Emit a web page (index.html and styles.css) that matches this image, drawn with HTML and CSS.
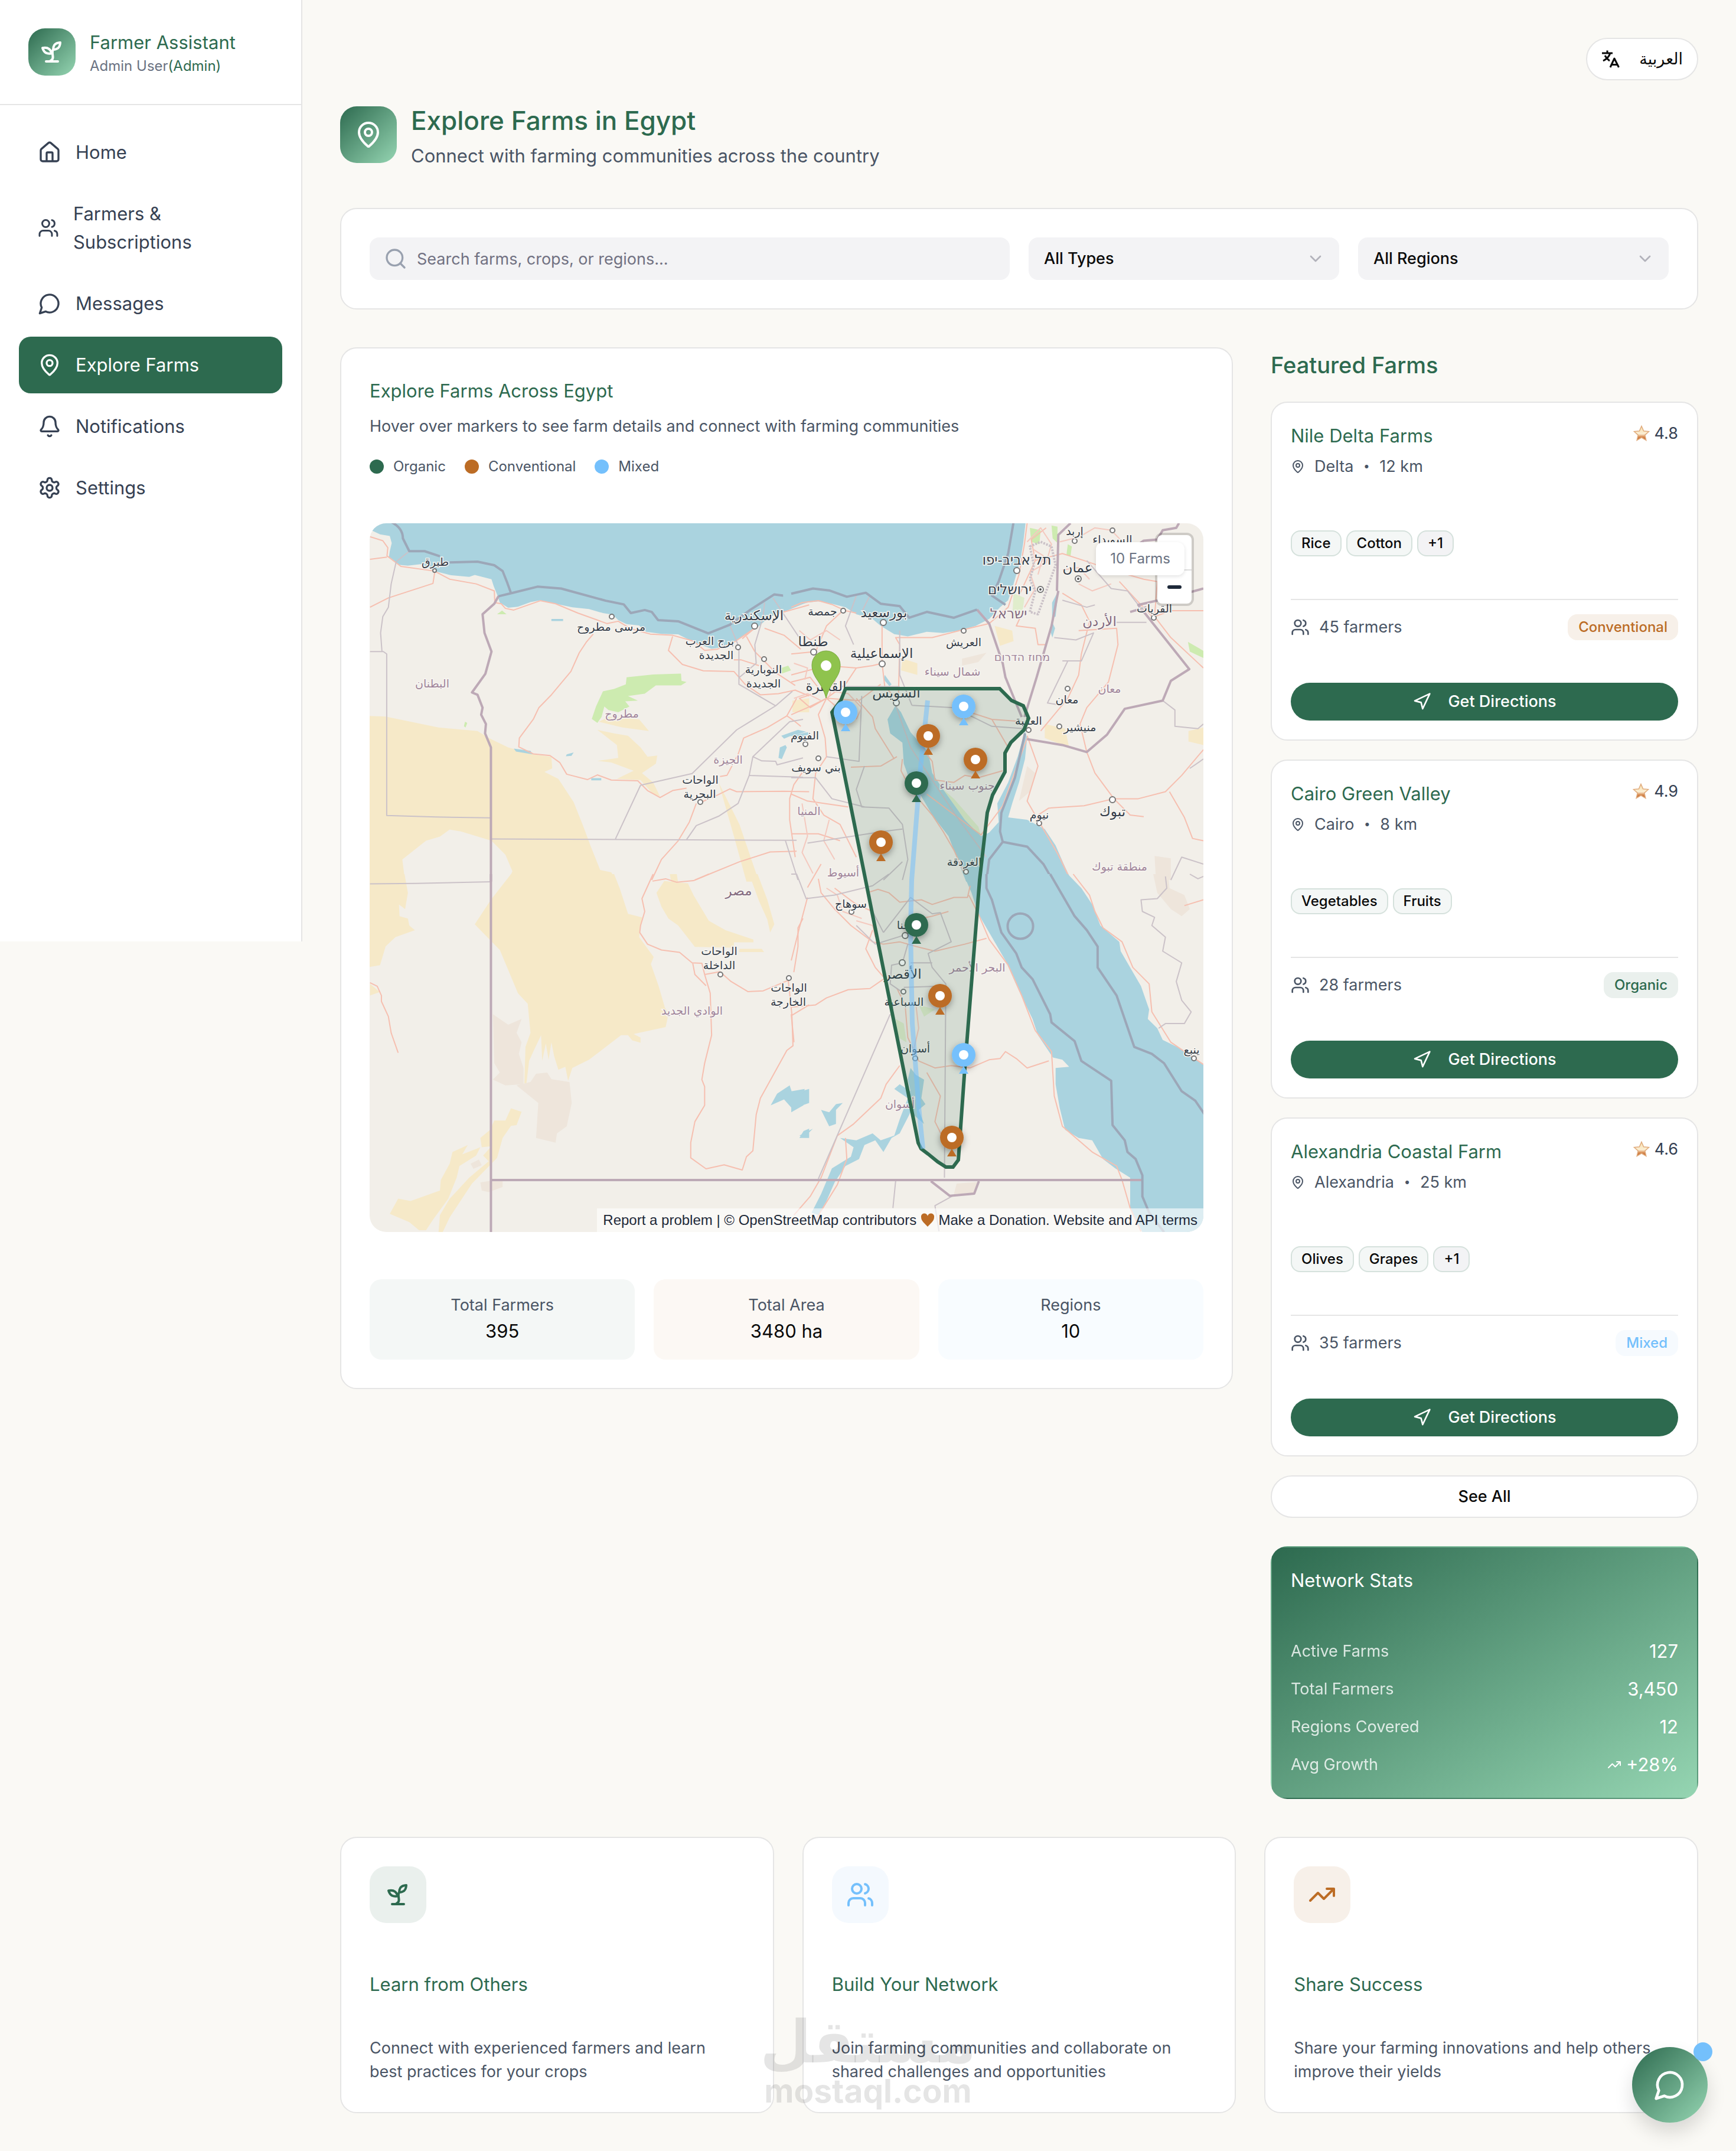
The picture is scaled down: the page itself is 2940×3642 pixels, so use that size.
FILE: index.html
```html
<!DOCTYPE html>
<html lang="en">
<head>
<meta charset="utf-8">
<meta name="viewport" content="width=device-width, initial-scale=1">
<title>Farmer Assistant</title>
<link rel="stylesheet" href="styles.css">
</head>
<body>
<svg class="sprite" aria-hidden="true">
  <symbol id="i-sprout" viewBox="0 0 24 24"><path d="M7 20h10M10 20c5.500-2.500.8-6.400 3-10M9.500 9.400c1.100.8 1.800 2.200 2.300 3.700-2 .4-3.500.4-4.800-.3-1.200-.6-2.300-1.900-3-4.200 2.800-.5 4.400 0 5.500.8zM14.100 6a7 7 0 0 0-1.100 4c1.900-.1 3.300-.6 4.300-1.400 1-1 1.600-2.300 1.700-4.600-2.700.1-4 1-4.900 2z"/></symbol>
  <symbol id="i-home" viewBox="0 0 24 24"><path d="M15 21v-8a1 1 0 0 0-1-1h-4a1 1 0 0 0-1 1v8M3 10a2 2 0 0 1 .709-1.528l7-5.999a2 2 0 0 1 2.582 0l7 5.999A2 2 0 0 1 21 10v9a2 2 0 0 1-2 2H5a2 2 0 0 1-2-2z"/></symbol>
  <symbol id="i-users" viewBox="0 0 24 24"><path d="M16 21v-2a4 4 0 0 0-4-4H6a4 4 0 0 0-4 4v2M16 3.128a4 4 0 0 1 0 7.744M22 21v-2a4 4 0 0 0-3-3.870"/><circle cx="9" cy="7" r="4"/></symbol>
  <symbol id="i-chat" viewBox="0 0 24 24"><path d="M7.900 20A9 9 0 1 0 4 16.100L2 22Z"/></symbol>
  <symbol id="i-pin" viewBox="0 0 24 24"><path d="M20 10c0 4.993-5.539 10.193-7.399 11.799a1 1 0 0 1-1.202 0C9.539 20.193 4 14.993 4 10a8 8 0 0 1 16 0"/><circle cx="12" cy="10" r="3"/></symbol>
  <symbol id="i-bell" viewBox="0 0 24 24"><path d="M10.268 21a2 2 0 0 0 3.464 0M3.262 15.326A1 1 0 0 0 4 17h16a1 1 0 0 0 .74-1.673C19.410 13.956 18 12.499 18 8A6 6 0 0 0 6 8c0 4.499-1.411 5.956-2.738 7.326"/></symbol>
  <symbol id="i-gear" viewBox="0 0 24 24"><path d="M12.220 2h-.44a2 2 0 0 0-2 2v.18a2 2 0 0 1-1 1.730l-.43.25a2 2 0 0 1-2 0l-.15-.08a2 2 0 0 0-2.730.73l-.22.38a2 2 0 0 0 .73 2.730l.15.1a2 2 0 0 1 1 1.720v.51a2 2 0 0 1-1 1.740l-.15.09a2 2 0 0 0-.73 2.730l.22.38a2 2 0 0 0 2.730.73l.15-.08a2 2 0 0 1 2 0l.43.25a2 2 0 0 1 1 1.730V20a2 2 0 0 0 2 2h.44a2 2 0 0 0 2-2v-.18a2 2 0 0 1 1-1.730l.43-.25a2 2 0 0 1 2 0l.15.08a2 2 0 0 0 2.730-.73l.22-.39a2 2 0 0 0-.73-2.730l-.15-.08a2 2 0 0 1-1-1.740v-.5a2 2 0 0 1 1-1.740l.15-.09a2 2 0 0 0 .73-2.730l-.22-.38a2 2 0 0 0-2.730-.73l-.15.08a2 2 0 0 1-2 0l-.43-.25a2 2 0 0 1-1-1.730V4a2 2 0 0 0-2-2z"/><circle cx="12" cy="12" r="3"/></symbol>
  <symbol id="i-search" viewBox="0 0 24 24"><circle cx="11" cy="11" r="8"/><path d="m21 21-4.340-4.340"/></symbol>
  <symbol id="i-chevron" viewBox="0 0 24 24"><path d="m6 9 6 6 6-6"/></symbol>
  <symbol id="i-nav" viewBox="0 0 24 24"><path d="M3 11 22 2l-9 19-2-8z"/></symbol>
  <symbol id="i-trend" viewBox="0 0 24 24"><path d="M16 7h6v6M22 7l-8.500 8.500-5-5L2 17"/></symbol>
  <symbol id="i-translate" viewBox="0 0 32 32"><path d="M1 6h18M10 1.500V6M15 6C13 12 9 16 3 19M6 10c2 4 5 7 8 9M15 30l7-15 7.500 15M17.500 25.500h9"/></symbol>
  <symbol id="i-star" viewBox="0 0 28 28"><path d="M14 1.500l3.600 8.300 9 .8-6.800 6 2 8.900L14 20.800l-7.800 4.700 2-8.900-6.800-6 9-.8z" fill="url(#starFill)" stroke="#e0ab7c" stroke-width="1.500"/></symbol>
  <symbol id="i-heart" viewBox="0 0 24 24"><path d="M12 23C8 18 1 14 1 7a5.500 5.500 0 0 1 11-2 5.500 5.500 0 0 1 11 2c0 7-7 11-11 16z" fill="#bc6c25"/></symbol>
</svg>
<svg class="sprite" aria-hidden="true"><defs><linearGradient id="starFill" x1="0" y1="0" x2="0" y2="1"><stop offset="0" stop-color="#f6dfae"/><stop offset=".55" stop-color="#fbeed3"/><stop offset=".75" stop-color="#d98f56"/><stop offset="1" stop-color="#b5531c"/></linearGradient></defs></svg>

<div class="app">
  <aside class="sidebar">
    <div class="brand">
      <span class="tile tile-logo"><svg class="icon icon-48"><use href="#i-sprout"/></svg></span>
      <div>
        <div class="brand-name">Farmer Assistant</div>
        <div class="brand-user">Admin User<span class="green">(Admin)</span></div>
      </div>
    </div>
    <nav class="nav">
      <a class="nav-item" href="#home"><svg class="icon icon-40"><use href="#i-home"/></svg><span>Home</span></a>
      <a class="nav-item" href="#farmers"><svg class="icon icon-40"><use href="#i-users"/></svg><span>Farmers &amp; Subscriptions</span></a>
      <a class="nav-item" href="#messages"><svg class="icon icon-40"><use href="#i-chat"/></svg><span>Messages</span></a>
      <a class="nav-item active" href="#explore" aria-current="page"><svg class="icon icon-40"><use href="#i-pin"/></svg><span>Explore Farms</span></a>
      <a class="nav-item" href="#notifications"><svg class="icon icon-40"><use href="#i-bell"/></svg><span>Notifications</span></a>
      <a class="nav-item" href="#settings"><svg class="icon icon-40"><use href="#i-gear"/></svg><span>Settings</span></a>
    </nav>
  </aside>

  <main class="main">
    <div class="topbar">
      <button class="lang" type="button"><svg class="icon icon-32 icon-bold"><use href="#i-translate"/></svg><span lang="ar">العربية</span></button>
    </div>

    <header class="page-head">
      <span class="tile"><svg class="icon icon-48"><use href="#i-pin"/></svg></span>
      <div>
        <h1>Explore Farms in Egypt</h1>
        <p>Connect with farming communities across the country</p>
      </div>
    </header>

    <form class="card filters">
      <div class="field search">
        <label class="sr" for="q">Search farms</label>
        <svg class="icon icon-40"><use href="#i-search"/></svg>
        <input id="q" type="text" placeholder="Search farms, crops, or regions...">
      </div>
      <div class="field">
        <label class="sr" for="type">Farm type</label>
        <select id="type"><option>All Types</option></select>
        <svg class="icon icon-32"><use href="#i-chevron"/></svg>
      </div>
      <div class="field">
        <label class="sr" for="region">Region</label>
        <select id="region"><option>All Regions</option></select>
        <svg class="icon icon-32"><use href="#i-chevron"/></svg>
      </div>
    </form>

    <div class="columns">
      <section class="card map-card">
        <h2 class="card-title">Explore Farms Across Egypt</h2>
        <p class="map-sub">Hover over markers to see farm details and connect with farming communities</p>
        <ul class="legend">
          <li><span class="dot organic"></span>Organic</li>
          <li><span class="dot conventional"></span>Conventional</li>
          <li><span class="dot mixed"></span>Mixed</li>
        </ul>

        <div class="map">
          <svg class="map-art" viewBox="0 0 1412 1200" role="img" aria-label="Map of Egypt with farm markers">
            <defs>
              <filter id="pinShadow" x="-60%" y="-60%" width="220%" height="220%"><feDropShadow dx="0" dy="4" stdDeviation="6" flood-opacity=".35"/></filter>
              <g id="pinBody"><circle r="20" filter="url(#pinShadow)"/><path d="M0 19l8 13h-16z"/><circle r="8" fill="#fff"/></g>
            </defs>
            <rect width="1412" height="1200" fill="#f2efe9"/>

            <!-- north-west -->
            <g class="tilemap" transform="translate(-6 -16) scale(.4719 .3954)">
              <path class="sand" d="M0 865L70 868 260 915 400 930 440 960 510 1000 600 1030 665 1040 668 1090 640 1105 690 1135 745 1235 780 1340 805 1420 840 1525 880 1535 900 1575H510L525 1530 500 1460 450 1400 340 1360 300 1352 265 1382 215 1400 130 1480 140 1575H0z"/>
              <path class="sand" d="M830 925L890 940 940 950 985 1000 1010 1040 1045 1035 1040 1070 990 1110 1030 1150 1055 1210 1030 1200 985 1140 900 1135 960 1100 880 1065 830 1058 905 1045 900 990zM835 890L870 870 980 880 1015 930 920 915zM1265 1150L1340 1330 1410 1575H1365L1320 1380zM1530 800L1590 790V850L1530 850z"/>
              <path class="green-area" d="M935 700L1030 688 1130 684 1132 715 1150 720 1130 735 1040 735 1000 770 940 780 975 800 930 803 945 825 905 850 870 840 855 825 845 870 830 895 810 878 825 825 850 760 890 750 932 730zM355 890l8 5-6 20-6-5zM470 430l18-16 16 16zM1490 660l25-10 10 20-35 15z"/>
              <path class="water" d="M0 60L50 88 85 95 92 125 85 160 82 185 100 200 115 218 150 222 200 215 245 245 300 262 370 270 390 262 450 280 458 310 470 345 480 380 510 402 545 398 590 378 625 370 680 385 740 400 800 408 850 425 885 432 905 455 935 472 980 478 1005 505 1060 514 1120 516 1160 540 1200 560 1240 578 1280 570 1320 548 1360 520 1400 490 1450 440 1500 420 1590 375V30H0z"/>
              <path class="water" d="M665 450h42v9h-42zM530 1005l60 10 8 15-60-12zM720 1030l25-8-8 14-20 2zM808 1132h36v9h-36zM1490 950l60-25 30 8-60 20-20 10zM1485 1000l20-10 5 10-18 50-12-5z"/>
              <path class="road" d="M14 98L60 115 78 145 75 180 125 225 245 245 300 280 395 300 460 330 462 380 485 385 500 405 530 412 625 372 680 385 760 425 865 470 905 460 950 492 1020 515 1100 520 1175 545 1215 585 1260 580 1320 550 1394 490M14 195L75 185M247 245L240 298 80 360 14 400M815 515L790 550 765 595 735 675 665 775 620 830 600 880 550 960 548 998 600 1028 660 1035 695 1065 720 1115 795 1138 830 1118 880 1140 975 1143 1010 1185 1055 1215 1100 1185 1150 1175M1100 525L1085 585 1135 645 1210 672 1320 675 1360 730 1415 775 1480 770 1540 755 1590 780M1320 625L1345 625 1410 650M1394 490L1350 535M1365 525L1395 590 1470 680 1540 735M1430 490L1500 520 1560 580M1470 430L1590 390M1545 790L1510 865 1440 915 1355 960 1335 1030 1295 1120 1270 1125M1510 865L1540 890 1560 910M1200 1236L1260 1205 1305 1178 1330 1190 1500 1188 1590 1190M1185 1240L1160 1320 1120 1400 1060 1480 1025 1568M1180 1568L1340 1490 1450 1448 1545 1445M1570 1100L1535 1160 1520 1220 1520 1310 1530 1390 1540 1470"/>
              <path class="admin" d="M155 160L108 205 90 300 80 400 60 440 52 510 57 590M14 590H62L74 600V1292L250 1298 448 1302M448 1392L1545 1398M985 1162L895 1392M985 1162L1170 1112 1330 925 1470 822 1530 760M1338 570V730L1470 822M1305 475L1338 570M1430 380L1425 440 1395 560 1400 640 1340 700M1568 880L1520 890 1388 1040 1375 1120 1568 1128M1388 1040L1420 1058 1470 1060 1475 1075 1568 1045M1375 1120L1335 1240 1265 1295 1185 1335 1150 1395M1460 360L1510 450 1560 540M1505 1400L1550 1568"/>
              <path class="border" d="M475 353L460 385 418 430 425 510 450 590 428 685 380 765 400 775 418 830 413 860 430 900 427 940 448 1000V1575"/>
              <path class="sea-border" d="M90 35C115 50 132 70 132 105L155 160H210L265 182M300 208L400 205 460 220 490 245 505 290 520 340M475 353L520 340 615 312 700 320 860 372 925 388 950 425 1000 412 1025 420 1048 455 1120 460 1228 512 1305 475 1380 410 1465 345 1510 352 1590 330"/>
            </g>

            <!-- south-west -->
            <g class="tilemap" transform="translate(-6 594) scale(.4719 .3954)">
              <path class="sand" d="M0 0H138L150 80 140 150 118 130 120 180 150 190 155 220 175 240 105 270 70 310 50 390 0 400zM520 0H890L910 60 940 170 990 185 980 270 1032 355 1022 385 1050 480 1072 570 1085 600 1075 655 960 685 985 700V722L955 712 940 690 915 690 800 795 740 830 725 885 715 825 690 838 675 780 665 720 655 795 645 725 632 800 628 690 600 760 585 800 575 900 568 895 572 740 590 680 580 555 545 510 480 325 390 215 448 110zM1090 0l25 0 5 38-25-5zM1070 30L1155 40 1175 90 1230 200 1290 240 1390 280V292H1320V315L1180 312 1120 220 1085 190 1060 140 1042 80zM1375 0H1405L1440 110 1465 215 1450 250 1440 195 1410 115zM1340 320h80l8 14h-90z"/>
              <path class="sand" d="M520 1003L558 1018 540 1075 520 1078 490 1130 470 1215 380 1325 300 1470 275 1533H260L265 1460 300 1390 370 1300 440 1230 420 1205 450 1165 415 1170 410 1130 445 1095 460 1055H500zM310 1190L365 1160 345 1200 410 1170 395 1205 335 1250 325 1300 295 1390 240 1480 215 1525H190L155 1490 85 1455 115 1390 160 1400 265 1355 268 1310 300 1240zM14 470l35 35-35 15z"/>
              <path class="scrub" d="M455 600L510 645 558 620 540 680 558 720 548 770 565 830V900L500 905 455 880 480 850 460 810zM540 905L590 890 610 855 650 850 665 878 730 890 738 980 720 1080 685 1110 680 1150 610 1130 618 980zM375 1240l30-18 10 25-30 15zM410 1320L490 1305V1340L440 1362 415 1355z"/>
              <path class="water" d="M1452 990L1475 940 1520 905 1530 940 1590 920V980L1530 1005 1500 965zM1555 1130l15-30 20-10v40z"/>
              <path class="road" d="M14 465L40 480 55 520 55 545 80 610 90 680 115 765M1030 0L990 105 1000 160 985 220 982 250 1010 300 1060 325 1125 335 1170 380 1205 382 1215 430 1270 418 1310 460 1370 503 1425 500 1515 455M1028 30L1075 20 1115 35 1175 28 1230 0M1172 380L1180 430 1220 478M1215 430L1235 510 1240 690 1215 810 1205 880 1215 910V990L1180 1060 1165 1150 1165 1215 1220 1262 1285 1245 1350 1267 1365 1210 1388 1185 1400 1030 1415 960 1510 755 1532 735 1528 600 1515 455M1568 190L1550 230V310L1535 420M1528 605L1590 560"/>
              <path class="admin" d="M14 42L180 40 448 33"/>
              <path class="border" d="M448 0V1540M448 1310H1600"/>
            </g>

            <!-- north-east -->
            <g class="tilemap" transform="translate(714 -16) scale(.4592 .3954)">
              <path class="sand" d="M750 480L815 500 820 545 770 565zM935 900L1010 920 1025 1000 935 960zM1465 930L1520 915V990L1465 975zM410 620l55 20v50l-60-20z"/>
              <path class="scrub" d="M870 1080L900 1110 880 1190 840 1230zM1340 1465l60 10v93h-55zM630 620l90-25-30 40-60 15z"/>
              <path class="green-area" d="M1463 548L1525 590V620L1470 590zM880 60l40 10-5 60-30-10zM960 50l22 5v70l-18-20zM1020 130l15 10-5 40-15-5z"/>
              <path class="green-area pale" d="M560 1180L600 1220 690 1340 700 1378 640 1310zM820 340l40 20-10 80-35 10z"/>
              <path class="water" d="M-30 410L60 380 100 375 150 385 200 400 240 430 300 450 330 480 380 515 430 525 500 505 560 510 620 500 680 480 730 450 770 400 800 370 815 320 830 260 845 200 855 130 865 30H-30z"/>
              <path class="water" d="M385 820L405 850 440 935 505 1020 520 1110 560 1180 640 1310 700 1380 730 1365 765 1320 760 1240 800 1150 835 1040 862 930 870 960 862 1050 840 1150 815 1240 800 1300 870 1310 935 1350 975 1420 1005 1500 1035 1575H645L600 1440 580 1380 520 1290 480 1210 440 1150 415 1070 410 980 365 940 355 880zM985 330L975 440 962 445 962 380zM965 470l8 20-10 40-8-30zM345 690l25 40-8 8-22-30zM0 950l60-15 10 8-50 25z"/>
              <path class="road" d="M0 400L40 380 100 372 150 388 200 415 240 425M0 600L90 590 130 480 190 415M80 590L130 640 100 700 130 780M335 470L335 640 300 650 240 660 130 650 0 690M335 640L345 740 395 800 400 560 385 530 520 530 620 500 730 470 800 400 840 260 860 130 870 40M240 790L300 870 310 920 380 1050M130 790L60 830 0 860M130 790L100 860 125 960 130 1040 90 1110 80 1220 120 1290 180 1330 240 1470M130 790L200 730 240 660M130 790L250 800 330 730M0 720L70 700 110 760 30 790 70 830 130 790 190 850 230 860M410 1050L405 1100 440 1180 520 1290 560 1360 600 1440 650 1568M660 850L740 880 860 890M480 1000L520 1060 530 1140 600 1150 640 1120 690 1130 780 1100M740 880L800 1000M840 350L900 200 885 110 940 60M900 200L1000 170 1080 200 1180 240 1300 280 1350 290M850 430L830 480 900 490 910 560 940 560 960 490M1000 340L1070 390 1100 460 1070 600 1060 690 1040 740 1020 790 920 930M1060 500L1200 490 1205 560 1170 720 1090 830 1065 900 1090 1020 1120 1110 1190 1220M1190 1220L1280 1220 1380 1190 1440 1120 1520 1010M1190 1220L1080 1250 950 1260 910 1290M1190 1220L1250 1290 1300 1297M1395 1190L1450 1300 1480 1390 1520 1400M870 950L910 1080 870 1230 920 1330M1350 290L1340 440 1400 530 1520 660M1340 440L1400 415 1520 415M1210 290L1290 390 1340 450M0 1200L60 1230 210 1255M0 1370L100 1370 180 1400M220 1085L330 1080 390 1040M920 1330L985 1460 1030 1568M500 1200L700 1375 780 1250 870 960M110 1500L80 1560 60 1600"/>
              <path class="road minor" d="M10 640L60 660 50 710M150 760L210 770 260 830 240 880M170 640L160 720 140 780M30 500L70 540 130 500 180 540M870 120L920 60 960 130 940 210 880 250 900 320 860 400M890 150L930 180 910 260M990 120L1060 100 1120 60 1180 70 1230 130M1060 300L1110 330 1180 300M1000 240L1060 230 1100 280M10 790L60 770 110 800M40 1240L60 1380 40 1450 80 1540M140 1310L120 1400 160 1480"/>
              <path class="admin" d="M240 350L200 480 230 560M290 350L260 420M180 740L400 740M260 780L250 1060 130 1040M445 820L600 830 740 910 860 920M400 500V690L445 820M270 1080L240 1180 260 1255 360 1260 410 1330 430 1480 410 1568M0 1130L90 1130 150 1220 270 1255M60 1410L340 1360 410 1350M340 1568L410 1490M1000 630L1070 630 1115 510 1050 540 970 530M1000 370L1090 400 1120 390M1200 465H1310M1020 630L970 750 945 810 1000 820M1090 200L1180 320 1240 330 1280 390M1370 800L1415 840V910L1500 920 1520 900M1520 1050L1470 1090M1520 1500L1440 1470 1400 1568M385 820L440 1000 600 1280 720 1470"/>
              <path class="admin hatch" d="M880 140L920 120 960 140 975 220 950 300 910 430 880 420 900 330 880 280 895 220z"/>
              <path class="border" d="M685 410L730 470 780 640 790 700 850 870M980 330L985 90 1030 40M985 330L960 480 930 600 905 700 860 870M870 965L1000 990 1090 1020 1165 945 1230 835 1370 800 1400 715 1468 665 1280 390 1410 355 1520 320M1310 400L1250 420M1430 40L1420 60 1370 70 1350 110 1300 115 1220 180"/>
              <path class="sea-border" d="M820 35L800 170 765 290 740 350 790 390M0 342L80 320 140 328 205 355 275 338 330 385 400 395 435 445 500 420 600 445 685 410M862 940L825 1130 775 1280 770 1360 780 1405 730 1480 720 1568M780 1405L870 1425 930 1500 960 1560"/>
            </g>

            <!-- south-east -->
            <g class="tilemap" transform="translate(714 594) scale(.4592 .3954)">
              <path class="scrub" d="M1335 0H1390L1395 60 1450 90 1470 150 1440 180 1400 150 1350 80zM610 1325L690 1318 680 1365 600 1370z"/>
              <path class="green-area pale" d="M385 620L415 640 425 720 395 700zM470 560l60 20-40 30z"/>
              <path class="water" d="M635 0L665 80 690 170 740 270 790 370 840 500 890 620 910 690 965 785 1000 795 1025 825 975 830 975 900 990 1000 1010 1095 1060 1130 1110 1140 1150 1220 1195 1260 1250 1300V1430L1300 1545H1530V825L1440 750 1370 710 1350 660 1315 620 1320 580 1290 480 1215 330 1210 290 1140 220 1110 130 1070 60 1020 0z"/>
              <path class="water" d="M440 830L460 860 490 880 480 960 495 985 470 1010 490 1070 440 1020 400 1110 370 1130 340 1190 310 1140 270 1160 250 1220 200 1250 160 1320 130 1400 100 1460 75 1450 110 1370 150 1260 220 1210 230 1170 180 1130 240 1140 300 1110 330 1140 380 1120 400 1050 430 960 380 920 400 900 440 930 430 880zM0 930L50 920 40 950 45 990 0 1020zM110 1010L140 1020 165 985 190 980 165 1010V1070L140 1080zM30 1120L80 1090 50 1125z"/>
              <path class="road" d="M1040 0L1100 90 1120 160 1150 230 1220 290 1260 400 1320 470 1330 590 1400 720 1520 815M1450 135L1520 110M280 80L320 65 360 80 400 120 480 110 520 130 600 100 650 100 660 50M655 90L690 170 730 280 800 390 850 520 900 670 960 760 970 950 1000 1080 1110 1190 1200 1250 1220 1310 1250 1430 1290 1530M100 20L110 80 160 150 220 220 300 290 340 300 400 290M300 240L275 320 310 400 340 440M400 290L460 310 530 330 640 300 720 275M390 490L420 560 430 700 470 800 530 830 590 820 660 830 730 795 770 790 790 760 830 790 870 830 950 800M500 850L550 950 530 1060 560 1130M400 820L350 900 330 960 230 1070 170 1120 110 1300 70 1380 10 1460M200 1130L205 1220 170 1330 90 1480M0 570L90 560 130 530 210 495 290 490 340 450M0 600L10 720M60 100L30 230 0 370M300 160L240 130 160 60M440 200L520 180 580 160"/>
              <path class="road minor" d="M130 60L170 90 190 160 260 190M240 200L300 220 310 270M460 560L470 660 450 760"/>
              <path class="admin" d="M0 0L20 0 55 105 160 90 300 50 360 0M340 250L440 100 520 170 550 165 590 290 505 340 520 400 570 470 565 1300M415 485L550 480M365 600L100 1305M340 250L300 160M440 380H520M430 300L410 380 370 390 365 470 415 510M240 220L310 300 420 260M385 1315L375 1430M600 1375L530 1420 545 1530M1470 0L1500 20 1520 10"/>
              <path class="admin" d="M1380 10L1385 60 1350 105 1290 110 1295 160 1340 185 1330 220 1380 270 1370 330 1440 380 1420 460 1440 540 1475 590 1450 640 1380 640 1355 660"/>
              <path class="border" d="M-30 1310H1295M515 1315L585 1378 675 1368 692 1315"/>
              <path class="sea-border" d="M720 0V60L740 110 775 250 830 340 850 400 890 450 955 600 960 635 1045 715 1070 800 1180 885 1185 1075 1230 1140 1240 1190 1270 1220 1295 1290 1295 1380 1320 1450 1375 1533M955 0L980 50 1045 180 1090 240 1130 310 1130 400 1200 520 1265 740 1330 770 1375 810 1440 930 1490 970 1525 1030"/>
              <ellipse class="sea-border" cx="845" cy="223" rx="47" ry="54"/>
            </g>

            <g class="places">
              <circle cx="110" cy="80" r="3"/><circle cx="410" cy="158" r="4"/><circle cx="652" cy="174" r="5"/><circle cx="624" cy="210" r="4"/><circle cx="668" cy="230" r="4"/><circle cx="560" cy="472" r="4"/><circle cx="594" cy="764" r="4"/><circle cx="710" cy="770" r="4"/><circle cx="802" cy="148" r="4"/><circle cx="870" cy="168" r="5"/><circle cx="752" cy="218" r="5"/><circle cx="1006" cy="182" r="4"/><circle cx="868" cy="238" r="5"/><circle cx="892" cy="304" r="5"/><circle cx="1096" cy="80" r="5"/><circle cx="1136" cy="112" r="5"/><circle cx="1200" cy="94" r="5"/><circle cx="1194" cy="30" r="4"/><circle cx="1258" cy="12" r="4"/><circle cx="1328" cy="160" r="4"/><circle cx="1182" cy="280" r="4"/><circle cx="1168" cy="344" r="4"/><circle cx="1116" cy="350" r="4"/><circle cx="738" cy="374" r="4"/><circle cx="760" cy="398" r="4"/><circle cx="1258" cy="468" r="5"/><circle cx="1134" cy="508" r="4"/><circle cx="1010" cy="590" r="4"/><circle cx="816" cy="658" r="4"/><circle cx="907" cy="698" r="5"/><circle cx="902" cy="744" r="5"/><circle cx="904" cy="793" r="4"/><circle cx="924" cy="906" r="4"/><circle cx="1396" cy="906" r="4"/>
              <circle class="core" cx="1136" cy="112" r="2"/><circle class="core" cx="1200" cy="94" r="2"/>
            </g>

            <g class="labels">
              <text x="111" y="72">طبرق</text><text x="409" y="182">مرسى مطروح</text><text class="big" x="651" y="164">الإسكندرية</text><text x="576" y="206">برج العرب</text><text x="587" y="230">الجديدة</text><text x="667" y="254">النوبارية</text><text x="667" y="278">الجديدة</text><text x="560" y="441">الواحات</text><text x="559" y="465">البحرية</text><text x="592" y="731">الواحات</text><text x="592" y="755">الداخلة</text><text x="710" y="793">الواحات</text><text x="709" y="817">الخارجة</text>
              <text class="big" x="1096" y="70">תל אביב-יפו</text><text class="big" x="1084" y="120">ירושלים</text><text x="1194" y="20">إربد</text><text x="1258" y="34">السويداء</text><text class="big" x="1199" y="83">عمان</text><text x="1329" y="151">القريات</text><text x="767" y="156">جمصة</text><text class="big" x="871" y="159">بورسعيد</text><text class="big" x="751" y="208">طنطا</text><text x="1006" y="208">العريش</text><text class="big" x="867" y="228">الإسماعيلية</text><text class="big" x="773" y="284">القاهرة</text><text class="big" x="892" y="295">السويس</text><text x="1181" y="305">معان</text><text x="1116" y="341">العقبة</text><text x="1203" y="352">منيشير</text><text x="737" y="366">الفيوم</text><text x="756" y="420">بني سويف</text><text x="1134" y="500">نيوم</text><text class="big" x="1258" y="496">تبوك</text><text x="1007" y="580">الغردقة</text><text x="815" y="651">سوهاج</text><text x="903" y="687">قنا</text><text class="big" x="903" y="771">الأقصر</text><text x="905" y="817">السباعية</text><text x="924" y="896">أسوان</text><text x="1392" y="898">ينبع</text>
              <g class="regions"><text x="106" y="278">البطنان</text><text x="427" y="329">مطروح</text><text x="607" y="407">الجيزة</text><text class="country" x="625" y="630">مصر</text><text x="546" y="832">الوادي الجديد</text><text class="country" x="1082" y="161">ישראל</text><text class="country" x="1236" y="174">الأردن</text><text x="1105" y="233">מחוז הדרום</text><text x="987" y="258">شمال سيناء</text><text x="1253" y="287">معان</text><text x="1012" y="451">جنوب سيناء</text><text x="744" y="494">المنيا</text><text x="802" y="598">أسيوط</text><text x="1270" y="588">منطقة تبوك</text><text x="1029" y="759">البحر الأحمر</text><text x="898" y="990">أسوان</text></g>
            </g>

            <path class="zone" d="M806 280H1067L1087 300 1107 309 1116 330 1108 350 1086 371 1076 389V421L1055 460 1046 490 1033 604 1008 922 997 1078 988 1090H976L962 1081 946 1068 934 1059 929 1049 783 320 798 300z"/>
            <path class="nile" d="M945 300L932 423 918 604 916 689 919 847 930 989 937 1059"/>

            <g class="home-pin"><path d="M773 296C766 268 749 262 749 240a24 24 0 0 1 48 0C797 262 780 268 773 296z"/><circle cx="773" cy="241" r="9"/></g>
            <g class="pins">
              <use class="mixed" href="#pinBody" x="806" y="320"/><use class="mixed" href="#pinBody" x="1006" y="310"/><use class="conventional" href="#pinBody" x="946" y="360"/><use class="conventional" href="#pinBody" x="1026" y="400"/><use class="organic" href="#pinBody" x="926" y="440"/><use class="conventional" href="#pinBody" x="866" y="540"/><use class="organic" href="#pinBody" x="926" y="680"/><use class="conventional" href="#pinBody" x="966" y="800"/><use class="mixed" href="#pinBody" x="1006" y="900"/><use class="conventional" href="#pinBody" x="986" y="1040"/>
            </g>
          </svg>
          <div class="zoom">
            <button type="button" aria-label="Zoom in"><span class="bar"></span></button>
            <button type="button" aria-label="Zoom out"><span class="bar"></span></button>
          </div>
          <div class="farm-count">10 Farms</div>
          <div class="credit"><a href="#report">Report a problem</a> | © <a href="#osm">OpenStreetMap contributors</a> <svg class="heart"><use href="#i-heart"/></svg> <a href="#donate">Make a Donation</a>. <a href="#terms">Website and API terms</a></div>
        </div>

        <dl class="totals">
          <div class="total organic-bg"><dt>Total Farmers</dt><dd>395</dd></div>
          <div class="total conventional-bg"><dt>Total Area</dt><dd>3480 ha</dd></div>
          <div class="total mixed-bg"><dt>Regions</dt><dd>10</dd></div>
        </dl>
      </section>

      <section class="side">
        <h2 class="side-title">Featured Farms</h2>
        <article class="card farm">
          <div class="farm-head">
            <div><h3 class="card-title">Nile Delta Farms</h3>
            <div class="where"><svg class="icon icon-24"><use href="#i-pin"/></svg><span>Delta</span><span class="sep">•</span><span>12 km</span></div></div>
            <div class="rating"><svg class="star"><use href="#i-star"/></svg><span>4.8</span></div>
          </div>
          <div class="chips"><span class="chip">Rice</span><span class="chip">Cotton</span><span class="chip more">+1</span></div>
          <div class="farm-foot"><span class="count"><svg class="icon icon-32"><use href="#i-users"/></svg>45 farmers</span><span class="badge badge-conventional">Conventional</span></div>
          <button class="directions" type="button"><svg class="icon icon-32"><use href="#i-nav"/></svg>Get Directions</button>
        </article>
        <article class="card farm">
          <div class="farm-head">
            <div><h3 class="card-title">Cairo Green Valley</h3>
            <div class="where"><svg class="icon icon-24"><use href="#i-pin"/></svg><span>Cairo</span><span class="sep">•</span><span>8 km</span></div></div>
            <div class="rating"><svg class="star"><use href="#i-star"/></svg><span>4.9</span></div>
          </div>
          <div class="chips"><span class="chip">Vegetables</span><span class="chip">Fruits</span></div>
          <div class="farm-foot"><span class="count"><svg class="icon icon-32"><use href="#i-users"/></svg>28 farmers</span><span class="badge badge-organic">Organic</span></div>
          <button class="directions" type="button"><svg class="icon icon-32"><use href="#i-nav"/></svg>Get Directions</button>
        </article>
        <article class="card farm">
          <div class="farm-head">
            <div><h3 class="card-title">Alexandria Coastal Farm</h3>
            <div class="where"><svg class="icon icon-24"><use href="#i-pin"/></svg><span>Alexandria</span><span class="sep">•</span><span>25 km</span></div></div>
            <div class="rating"><svg class="star"><use href="#i-star"/></svg><span>4.6</span></div>
          </div>
          <div class="chips"><span class="chip">Olives</span><span class="chip">Grapes</span><span class="chip more">+1</span></div>
          <div class="farm-foot"><span class="count"><svg class="icon icon-32"><use href="#i-users"/></svg>35 farmers</span><span class="badge badge-mixed">Mixed</span></div>
          <button class="directions" type="button"><svg class="icon icon-32"><use href="#i-nav"/></svg>Get Directions</button>
        </article>
        <button class="see-all" type="button">See All</button>

        <div class="network">
          <h3>Network Stats</h3>
          <dl>
            <div><dt>Active Farms</dt><dd>127</dd></div>
            <div><dt>Total Farmers</dt><dd>3,450</dd></div>
            <div><dt>Regions Covered</dt><dd>12</dd></div>
            <div><dt>Avg Growth</dt><dd><svg class="icon icon-24"><use href="#i-trend"/></svg>+28%</dd></div>
          </dl>
        </div>
      </section>
    </div>

    <section class="benefits">
      <article class="card benefit"><span class="tile tile-organic"><svg class="icon icon-48"><use href="#i-sprout"/></svg></span><h3 class="card-title">Learn from Others</h3><p>Connect with experienced farmers and learn best practices for your crops</p></article>
      <article class="card benefit"><span class="tile tile-mixed"><svg class="icon icon-48"><use href="#i-users"/></svg></span><h3 class="card-title">Build Your Network</h3><p>Join farming communities and collaborate on shared challenges and opportunities</p></article>
      <article class="card benefit"><span class="tile tile-conventional"><svg class="icon icon-48"><use href="#i-trend"/></svg></span><h3 class="card-title">Share Success</h3><p>Share your farming innovations and help others improve their yields</p></article>
    </section>
  </main>

  <div class="watermark"><span class="wm-ar" lang="ar">مستقل</span><span class="wm-en">mostaql.com</span></div>
  <button class="fab" type="button" aria-label="Open chat"><svg class="icon icon-56"><use href="#i-chat"/></svg><span class="fab-dot"></span></button>
</div>
</body>
</html>
```
FILE: styles.css
```css
:root {
  --green: #2d6a4f;
  --green-light: #95d5b2;
  --orange: #bc6c25;
  --blue: #74c0fc;
  --ink: #0a0a0a;
  --slate: #4a5565;
  --slate-dark: #364153;
  --line: #e5e5e5;
  --page: #faf9f5;
}

* { box-sizing: border-box; margin: 0; padding: 0; }

body {
  background: var(--page);
  color: var(--ink);
  font-family: Inter, "DejaVu Sans", sans-serif;
  font-size: 31px;
  line-height: 48px;
}

button, input, select { font: inherit; color: inherit; border: 0; }
h1, h2, h3 { font-size: inherit; font-weight: 400; }
ul { list-style: none; }
a { color: inherit; text-decoration: none; }

.sprite { position: absolute; width: 0; height: 0; }
.sr { position: absolute; left: 26px; opacity: 0; pointer-events: none; }
.green { color: var(--green); }

.icon { display: block; fill: none; stroke: currentColor; stroke-width: 2; stroke-linecap: round; stroke-linejoin: round; }
.icon-24 { width: 24px; height: 24px; }
.icon-32 { width: 32px; height: 32px; }
.icon-40 { width: 40px; height: 40px; }
.icon-48 { width: 48px; height: 48px; }
.icon-56 { width: 56px; height: 56px; }
.icon-bold { stroke-width: 3; stroke-linecap: butt; }

.app { display: flex; align-items: flex-start; position: relative; }

/* Sidebar */
.sidebar { flex: 0 0 512px; min-height: 1594px; background: #fff; border-right: 2px solid var(--line); }
.brand { display: flex; align-items: center; gap: 24px; padding: 48px; border-bottom: 2px solid var(--line); }
.brand-name { color: var(--green); }
.brand-user { font-size: 24px; line-height: 32px; color: #6a7282; }
.nav { display: flex; flex-direction: column; gap: 8px; padding: 32px; }
.nav-item { display: flex; align-items: center; gap: 24px; padding: 24px 32px; border-radius: 20px; color: var(--slate-dark); }
.nav-item.active { background: var(--green); color: #fff; }

.tile {
  display: grid; place-items: center; flex: none;
  width: 96px; height: 96px; border-radius: 28px; color: #fff;
  background: linear-gradient(to bottom right, var(--green), var(--green-light));
}
.tile-logo { width: 80px; height: 80px; }
.tile-organic { background: #eaf0ed; color: var(--green); }
.tile-mixed { background: #f4f9fe; color: var(--blue); }
.tile-conventional { background: #f7f0e9; color: var(--orange); }

/* Main */
.main { flex: 1; min-width: 0; padding: 64px; }
.topbar { display: flex; justify-content: flex-end; margin-bottom: 32px; }
.lang {
  display: flex; align-items: center; gap: 32px; height: 72px; padding: 0 24px;
  background: #fff; border: 2px solid var(--line); border-radius: 36px;
  font-size: 27px; font-weight: 500;
}
.page-head { display: flex; align-items: center; gap: 24px; margin-bottom: 64px; }
.page-head h1 { font-size: 44px; line-height: 72px; font-weight: 500; color: var(--green); }
.page-head p { color: var(--slate); }

.card { background: #fff; border: 2px solid var(--line); border-radius: 28px; padding: 48px; }
.card-title { color: var(--green); }

.filters { display: grid; grid-template-columns: repeat(4, 1fr); gap: 32px; margin-bottom: 64px; font-size: 27px; }
.field { position: relative; display: flex; align-items: center; height: 72px; background: #f3f3f5; border-radius: 16px; }
.field input, .field select { width: 100%; height: 100%; background: none; appearance: none; outline: 0; padding: 0 26px; }
.field select { font-weight: 500; }
.field .icon { position: absolute; right: 24px; color: #b2b2bb; pointer-events: none; }
.search { grid-column: span 2; }
.search input { padding-left: 80px; }
.search .icon { left: 24px; right: auto; color: #99a1af; }
.search input::placeholder { color: #717182; opacity: 1; }

.columns { display: grid; grid-template-columns: repeat(3, minmax(0, 1fr)); gap: 64px; align-items: start; margin-bottom: 64px; }
.map-card { grid-column: span 2; }
.map-sub { margin-top: 16px; font-size: 27px; line-height: 40px; color: var(--slate); }
.legend { display: flex; gap: 32px; margin: 32px 0 80px; font-size: 24px; line-height: 32px; color: var(--slate); }
.legend li { display: flex; align-items: center; gap: 16px; }
.dot { width: 24px; height: 24px; border-radius: 50%; }
.dot.organic { background: var(--green); }
.dot.conventional { background: var(--orange); }
.dot.mixed { background: var(--blue); }

/* Map */
.map { position: relative; border-radius: 28px; overflow: hidden; }
.map-art { display: block; width: 100%; height: auto; }
.tilemap path, .tilemap ellipse { fill: none; vector-effect: non-scaling-stroke; stroke-linejoin: round; }
.tilemap .sand { fill: #f6e9c8; }
.tilemap .scrub { fill: #eee5db; }
.tilemap .green-area { fill: #cdebb0; }
.tilemap .pale { opacity: .5; }
.tilemap .water { fill: #aad3df; }
.road { stroke: #f6bfb0; stroke-width: 2; }
.road.minor { stroke: #f4c9bf; }
.admin { stroke: #cbc2c8; stroke-width: 2; }
.hatch { stroke-width: 4; stroke-dasharray: 3 2; }
.border { stroke: #bda9b6; stroke-width: 4; }
.sea-border { stroke: #9ca7b8; stroke-width: 4; }
.places circle { fill: #fff; stroke: #777; stroke-width: 2; }
.places .core { fill: #555; stroke: none; }
.labels { font-family: "DejaVu Sans", sans-serif; font-size: 19px; text-anchor: middle; fill: #343c48; stroke: #f7f5f1; stroke-width: 3; paint-order: stroke; }
.labels .big { font-size: 23px; }
.regions { fill: #a0849a; }
.regions .country { font-size: 23px; fill: #836a7f; }
.zone { fill: var(--green); fill-opacity: .14; stroke: var(--green); stroke-width: 6; }
.nile { fill: none; stroke: var(--blue); stroke-width: 8; opacity: .55; }
.home-pin { fill: #8fc34d; }
.home-pin path { stroke: #78a83d; stroke-width: 1; }
.home-pin circle { fill: #fff; }
.pins .organic { fill: var(--green); }
.pins .conventional { fill: var(--orange); }
.pins .mixed { fill: var(--blue); }

.zoom { position: absolute; top: 16px; right: 16px; width: 66px; border: 4px solid rgba(0, 0, 0, .15); border-radius: 12px; background: #fff; background-clip: padding-box; }
.zoom button { display: grid; place-items: center; width: 100%; height: 58px; background: none; }
.zoom button + button { border-top: 2px solid #ddd; }
.bar { width: 24px; height: 6px; border-radius: 3px; background: #1e2939; }
.farm-count { position: absolute; top: 32px; right: 32px; padding: 12px 24px; background: #fff; border-radius: 12px; box-shadow: 0 2px 6px rgba(0, 0, 0, .12); font-size: 24px; line-height: 32px; color: #6a7282; }
.credit { position: absolute; right: 0; bottom: 0; padding: 0 10px; background: rgba(255, 255, 255, .6); font-family: "Liberation Sans", Arial, sans-serif; font-size: 24px; line-height: 40px; color: #1e2939; }
.heart { width: 24px; height: 24px; vertical-align: -4px; }

.totals { display: grid; grid-template-columns: repeat(3, 1fr); gap: 32px; margin-top: 80px; text-align: center; }
.total { padding: 24px; border-radius: 20px; }
.total dt { font-size: 27px; line-height: 40px; color: var(--slate); }
.organic-bg { background: #f4f7f6; }
.conventional-bg { background: #fcf8f4; }
.mixed-bg { background: #f8fcff; }

/* Featured farms */
.side { display: flex; flex-direction: column; gap: 32px; }
.side-title { font-size: 38px; line-height: 60px; font-weight: 500; color: var(--green); }
.farm { padding: 32px; font-size: 27px; line-height: 40px; }
.farm-head { display: flex; justify-content: space-between; align-items: flex-start; }
.farm .card-title { font-size: 31px; line-height: 48px; }
.where { display: flex; align-items: center; gap: 16px; margin-top: 8px; color: var(--slate); }
.sep { min-width: 12px; font-size: 19px; text-align: center; }
.rating { display: flex; align-items: center; gap: 8px; color: var(--slate-dark); }
.star { width: 28px; height: 28px; }
.chips { display: flex; gap: 8px; margin: 88px 0 72px; }
.chip, .badge { padding: 4px 16px; border: 2px solid #d5e1dc; border-radius: 16px; background: #f4f7f6; font-size: 24px; line-height: 32px; font-weight: 500; }
.chip.more { background: #f3f3f5; }
.farm-foot { display: flex; justify-content: space-between; align-items: center; padding-top: 24px; border-top: 2px solid var(--line); color: var(--slate); }
.count { display: flex; align-items: center; gap: 16px; }
.badge { border-color: transparent; }
.badge-conventional { background: #f7f0e9; color: var(--orange); }
.badge-organic { background: #eaf0ed; color: var(--green); }
.badge-mixed { background: #f6fafe; color: var(--blue); }
.directions { display: flex; align-items: center; justify-content: center; gap: 28px; width: 100%; height: 64px; margin-top: 72px; border-radius: 32px; background: var(--green); color: #fff; font-weight: 500; }
.see-all { height: 72px; background: #fff; border: 2px solid var(--line); border-radius: 36px; font-size: 27px; font-weight: 500; }

.network { margin-top: 16px; padding: 32px; border: 2px solid transparent; border-radius: 28px; color: #fff; background: linear-gradient(to bottom right, var(--green), var(--green-light)); }
.network dl { display: flex; flex-direction: column; gap: 16px; margin-top: 72px; }
.network dl div { display: flex; justify-content: space-between; align-items: center; }
.network dt { font-size: 27px; opacity: .8; }
.network dd { display: flex; align-items: center; gap: 8px; }

/* Benefits */
.benefits { display: grid; grid-template-columns: repeat(3, minmax(0, 1fr)); gap: 48px; }
.benefit .card-title { margin-top: 80px; }
.benefit p { margin-top: 64px; padding-right: 20px; font-size: 27px; line-height: 40px; color: var(--slate); }

.watermark { position: absolute; left: 50%; bottom: 72px; transform: translateX(-50%); display: flex; flex-direction: column; align-items: center; color: rgba(0, 0, 0, .1); font-weight: 700; pointer-events: none; }
.wm-ar { font-family: "DejaVu Sans", sans-serif; font-size: 100px; line-height: 104px; }
.wm-en { font-size: 55px; line-height: 60px; }

.fab { position: fixed; right: 48px; bottom: 48px; display: grid; place-items: center; width: 128px; height: 128px; border-radius: 50%; color: #fff; background: linear-gradient(to bottom right, var(--green), var(--green-light)); box-shadow: 0 16px 32px rgba(0, 0, 0, .14); }
.fab-dot { position: absolute; top: -8px; right: -8px; width: 32px; height: 32px; border-radius: 50%; background: var(--blue); }
```
